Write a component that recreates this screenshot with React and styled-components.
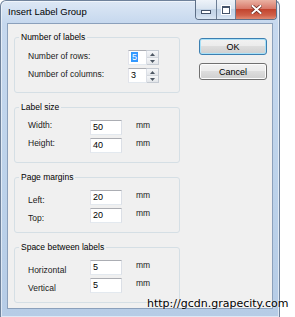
import styled, { createGlobalStyle } from 'styled-components';

const GlobalStyle = createGlobalStyle`
	html, body {
		margin: 0;
		padding: 0;
		background: #ffffff;
	}
	body {
		font-family: "Liberation Sans", Arial, sans-serif;
	}
`

const Screen = styled.div`
	position: relative;
	width: 295px;
	height: 317px;
	overflow: hidden;
	background: #ffffff;
`

const Window = styled.div`
	box-sizing: border-box;
	width: 280px;
	height: 317px;
	display: flex;
	flex-direction: column;
	padding: 0 6px 8px 6px;
	border: 1px solid #6f829b;
	border-bottom: none;
	border-radius: 6px 6px 0 0;
	background: linear-gradient(#dde8f5, #c6d8ee 22px, #bcd2ea 60%, #b6cce6);
	box-shadow: inset 0 0 0 1px rgba(255, 255, 255, 0.55);
`

const TitleBar = styled.div`
	height: 22px;
	display: flex;
	align-items: flex-start;
	justify-content: space-between;
`

const Title = styled.span`
	font-size: 9.5px;
	line-height: 22px;
	color: #000;
	padding-left: 1px;
`

const CaptionGroup = styled.div`
	display: flex;
	margin-right: -4px;
	margin-top: -1px;
	height: 19px;
	border: 1px solid #5d6f87;
	border-top: none;
	border-radius: 0 0 4px 4px;
	overflow: hidden;
`

const CaptionButton = styled.div`
	width: ${p => p.$w}px;
	display: flex;
	align-items: center;
	justify-content: center;
	border-left: ${p => (p.$first ? 'none' : '1px solid #6d7f96')};
	background: ${p => p.$close
		? 'linear-gradient(#eab2a3, #d8796a 45%, #c2452f 50%, #cf6049 80%, #e08a72)'
		: 'linear-gradient(#eef3f9, #d9e4f0 45%, #c2d3e6 50%, #cbdaec 80%, #dbe7f4)'};
`

const MinGlyph = styled.div`
	width: 8px;
	height: 2px;
	margin-top: 5px;
	background: #fff;
	border: 1px solid #44536a;
`

const MaxGlyph = styled.div`
	width: 6px;
	height: 5px;
	border: 1px solid #44536a;
	border-top-width: 2px;
	background: #fff;
	box-shadow: 0 0 0 1px #fff;
`

const Client = styled.div`
	flex: 1;
	display: flex;
	align-items: flex-start;
	gap: 19px;
	padding: 8px 5px 0 6px;
	background: #f0f0f0;
	border: 1px solid #8ba0bb;
`

const Groups = styled.div`
	width: 166px;
	display: flex;
	flex-direction: column;
	gap: 9px;
`

const Group = styled.fieldset`
	margin: 0;
	min-width: 0;
	padding: 8px 6px 9px 4px;
	border: 1px solid #d5dfe5;
	border-radius: 3px;
	display: flex;
	flex-direction: column;
	gap: 3px;
`

const Legend = styled.legend`
	padding: 0 2px;
	font-size: 8.5px;
	line-height: 10px;
	color: #000;
`

const Row = styled.div`
	height: 15px;
	margin-left: 9px;
	display: grid;
	grid-template-columns: ${p => p.$labelWidth}px auto 1fr;
	column-gap: 14px;
	align-items: start;
`

const Label = styled.span`
	font-size: 8.5px;
	line-height: 15px;
	color: #1a1a1a;
	margin-top: ${p => p.$drop}px;
	white-space: nowrap;
`

const Unit = styled.span`
	font-size: 8.5px;
	line-height: 15px;
	color: #1a1a1a;
	margin-top: -2px;
`

const TextBox = styled.div`
	box-sizing: border-box;
	width: ${p => p.$w}px;
	height: 15px;
	padding-left: 2px;
	background: #fff;
	border: 1px solid;
	border-color: #abadb3 #dbdfe6 #e3e9ef #e2e3ea;
	font-size: 9px;
	line-height: 13px;
	color: #000;
`

const Selected = styled.span`
	background: #3399ff;
	color: #fff;
	padding: 0 1px;
`

const Spinner = styled.div`
	display: flex;
	height: 15px;
`

const SpinArrows = styled.div`
	box-sizing: border-box;
	width: 12px;
	display: flex;
	flex-direction: column;
	border: 1px solid #c5cbd3;
	border-left: none;
	background: #eef0f3;
`

const SpinHalf = styled.div`
	flex: 1;
	display: flex;
	align-items: center;
	justify-content: center;
	background: linear-gradient(#f6f7f9, #e3e6ea);
	& + & {
		border-top: 1px solid #d3d7dd;
	}
`

const Buttons = styled.div`
	width: 69px;
	display: flex;
	flex-direction: column;
	gap: 8px;
	margin-top: 6px;
`

const Button = styled.div`
	box-sizing: border-box;
	height: 17px;
	display: flex;
	align-items: center;
	justify-content: center;
	font-size: 9px;
	color: #000;
	border: 1px solid ${p => (p.$default ? '#3c7fb1' : '#707070')};
	border-radius: 3px;
	background: linear-gradient(#f2f2f2, #ebebeb 50%, #dddddd 50%, #cfcfcf);
	box-shadow: inset 0 0 0 1px ${p => (p.$default ? '#a8e1f8' : '#fcfcfc')};
`

const Watermark = styled.span`
	position: absolute;
	left: 147px;
	top: 297px;
	font-family: "DejaVu Sans", Verdana, sans-serif;
	font-size: 11px;
	line-height: 13px;
	color: #000;
	text-shadow: 0 0 2px #fff;
	white-space: nowrap;
`

function Arrow({ up }) {
	return (
		<svg width="5" height="3" viewBox="0 0 5 3">
			<path d={up ? 'M0 3 L2.5 0 L5 3 Z' : 'M0 0 L2.5 3 L5 0 Z'} fill="#4d5763" />
		</svg>
	)
}

function CloseGlyph() {
	return (
		<svg width="11" height="9" viewBox="0 0 11 9">
			<path d="M1.5 1 L9.5 8 M9.5 1 L1.5 8" stroke="#6b2a1f" strokeWidth="3.4" strokeLinecap="square" />
			<path d="M1.5 1 L9.5 8 M9.5 1 L1.5 8" stroke="#ffffff" strokeWidth="2" strokeLinecap="square" />
		</svg>
	)
}

function SpinBox({ value, selected }) {
	return (
		<Spinner>
			<TextBox $w={19}>{selected ? <Selected>{value}</Selected> : value}</TextBox>
			<SpinArrows>
				<SpinHalf><Arrow up /></SpinHalf>
				<SpinHalf><Arrow /></SpinHalf>
			</SpinArrows>
		</Spinner>
	)
}

function Field({ label, value, drop }) {
	return (
		<Row $labelWidth={48}>
			<Label $drop={drop}>{label}</Label>
			<TextBox $w={32}>{value}</TextBox>
			<Unit>mm</Unit>
		</Row>
	)
}

const sizeGroups = [
	{ title: 'Label size', drop: -2, fields: [['Width:', '50'], ['Height:', '40']] },
	{ title: 'Page margins', drop: 3, fields: [['Left:', '20'], ['Top:', '20']] },
	{ title: 'Space between labels', drop: 3, fields: [['Horizontal', '5'], ['Vertical', '5']] },
]

export default function App() {
	return (
		<>
			<GlobalStyle />
			<Screen>
				<Window>
					<TitleBar>
						<Title>Insert Label Group</Title>
						<CaptionGroup>
							<CaptionButton $w={20} $first><MinGlyph /></CaptionButton>
							<CaptionButton $w={18}><MaxGlyph /></CaptionButton>
							<CaptionButton $w={40} $close><CloseGlyph /></CaptionButton>
						</CaptionGroup>
					</TitleBar>
					<Client>
						<Groups>
							<Group>
								<Legend>Number of labels</Legend>
								<Row $labelWidth={86}>
									<Label $drop={-1}>Number of rows:</Label>
									<SpinBox value="5" selected />
								</Row>
								<Row $labelWidth={86}>
									<Label $drop={-1}>Number of columns:</Label>
									<SpinBox value="3" />
								</Row>
							</Group>
							{sizeGroups.map(group => (
								<Group key={group.title}>
									<Legend>{group.title}</Legend>
									{group.fields.map(([label, value]) => (
										<Field key={label} label={label} value={value} drop={group.drop} />
									))}
								</Group>
							))}
						</Groups>
						<Buttons>
							<Button $default>OK</Button>
							<Button>Cancel</Button>
						</Buttons>
					</Client>
				</Window>
				<Watermark>http://gcdn.grapecity.com</Watermark>
			</Screen>
		</>
	)
}
